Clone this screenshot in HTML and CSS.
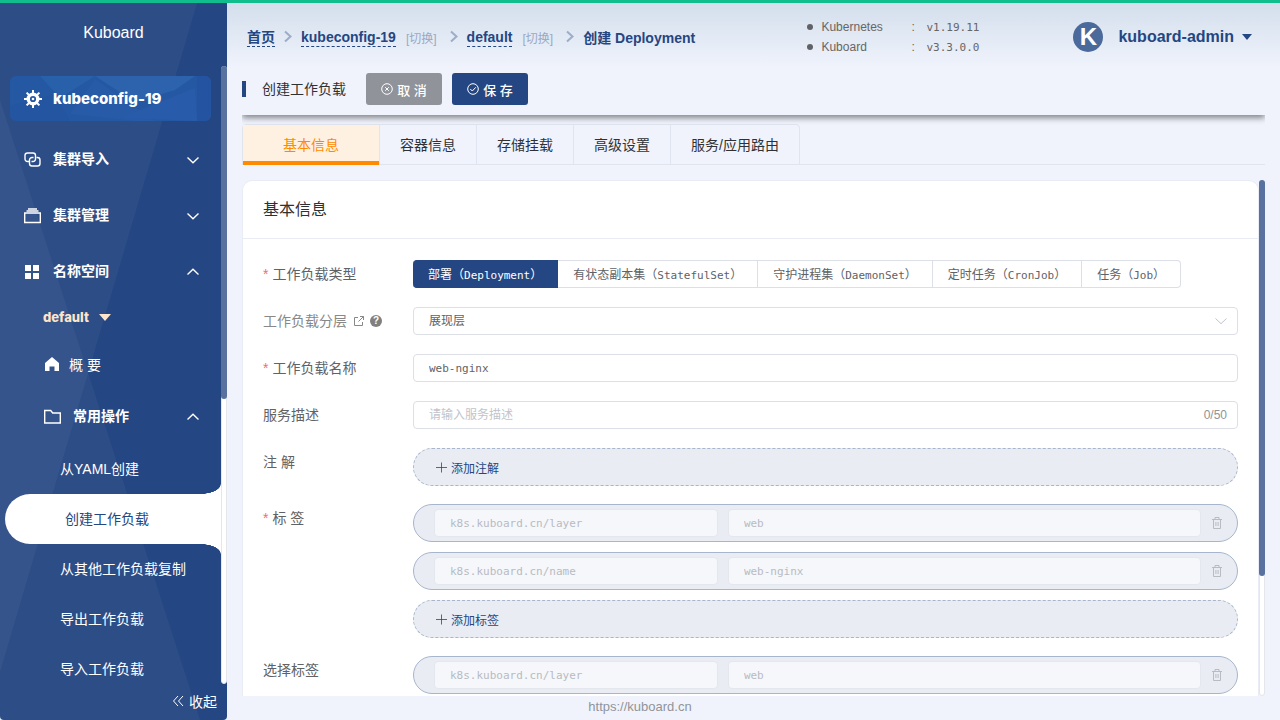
FILE: index.html
```html
<!DOCTYPE html>
<html lang="zh-CN">
<head>
<meta charset="utf-8">
<title>Kuboard</title>
<link rel="stylesheet" href="styles.css">
</head>
<body>
<svg class="sprite" aria-hidden="true">
  <symbol id="down" viewBox="0 0 12 12"><path d="M0.5 3.5 6 8.7l5.500-5.200"/></symbol>
  <symbol id="up" viewBox="0 0 12 12"><path d="M0.500 8.500 6 3.300l5.500 5.200"/></symbol>
  <symbol id="right" viewBox="0 0 12 14"><path d="M3 1.500l5.500 5L3 11.500"/></symbol>
  <symbol id="plus" viewBox="0 0 12 12"><path d="M6.500 1.500v10M1 6.500h11" stroke-width=".8"/></symbol>
  <symbol id="trash" viewBox="0 0 12 12"><path d="M1 2.500h10M4 2.500v-2h4v2M2.500 2.500v9h7v-9M4.900 5v4M7.100 5v4"/></symbol>
</svg>
<div class="app">
  <aside class="sidebar">
    <svg class="sidebar-art" viewBox="0 0 227 717" preserveAspectRatio="none" aria-hidden="true">
      <polygon points="0,0 197,0 0,669"/><polygon points="0,97 200,717 0,717"/>
    </svg>
    <div class="brand">Kuboard</div>
    <div class="sidebar-scroll">
      <nav class="menu">
        <a class="cluster" href="#">
          <svg class="cluster-art" viewBox="0 0 201 45" preserveAspectRatio="none" aria-hidden="true">
            <rect width="201" height="45" fill="#2558a3"/>
            <polygon points="30,0 85,0 50,22" fill="#2960aa"/><polygon points="85,3 145,45 125,45 60,38" fill="#275aa7"/>
            <polygon points="85,0 185,0 165,14 125,26" fill="#2c63ac"/><polygon points="0,30 45,18 60,45 0,45" fill="#2355a1"/>
            <polygon points="110,42 185,12 187,45" fill="#285ba9"/><polygon points="187,0 201,0 201,45 187,45" fill="#2454a1"/>
          </svg>
          <svg class="icon" viewBox="0 0 18 18" aria-hidden="true"><circle cx="9" cy="9" r="4.800" fill="none" stroke="#fff" stroke-width="3.400"/><circle cx="9" cy="9" r="1.300" fill="#fff" stroke="none"/><path d="M9 0v4M9 14v4M0 9h4M14 9h4M2.600 2.600 5 5M13 13l2.400 2.400M15.400 2.600 13 5M5 13l-2.400 2.400" stroke="#fff" stroke-width="2"/></svg>
          <span>kubeconfig-19</span>
        </a>
        <button class="menu-item" type="button">
          <svg class="icon line" viewBox="0 0 18 18"><path d="M5 10.500H3.500A2.500 2.500 0 0 1 1 8V4.500A2.500 2.500 0 0 1 3.500 2H9a2.500 2.500 0 0 1 2.500 2.500V8A2.500 2.500 0 0 1 9 10.500H7.500"/><path d="M12.500 6.500h1A2.500 2.500 0 0 1 16 9v3.500a2.500 2.500 0 0 1-2.500 2.500H8a2.500 2.500 0 0 1-2.500-2.500V9A2.500 2.500 0 0 1 8 6.500h1.500"/></svg>
          <span>集群导入</span><svg class="arrow"><use href="#down"/></svg>
        </button>
        <button class="menu-item" type="button">
          <svg class="icon line" viewBox="0 0 18 18"><path d="M.7 6h15.600v9.500H.7zM2.500 4h12M4 2h9"/></svg>
          <span>集群管理</span><svg class="arrow"><use href="#down"/></svg>
        </button>
        <button class="menu-item" type="button">
          <svg class="icon solid" viewBox="0 0 18 18"><path d="M1 2h6v6H1zM9 2h6v6H9zM1 10h6v6H1zM9 10h6v6H9z"/></svg>
          <span>名称空间</span><svg class="arrow"><use href="#up"/></svg>
        </button>
        <button class="namespace" type="button">default<i class="caret"></i></button>
        <a class="overview" href="#"><svg viewBox="0 0 16 16"><path d="M8 1 15 7v8h-4.500v-4.500h-5V15H1V7z"/></svg>概 要</a>
        <button class="menu-item common" type="button">
          <svg class="icon line" viewBox="0 0 18 18"><path d="M.7 2.500h6l2 2.500h7.600V15H.7z"/></svg>
          <span>常用操作</span><svg class="arrow"><use href="#up"/></svg>
        </button>
        <div class="submenu">
          <a href="#">从YAML创建</a>
          <a class="active" href="#">创建工作负载</a>
          <a href="#">从其他工作负载复制</a>
          <a href="#">导出工作负载</a>
          <a href="#">导入工作负载</a>
        </div>
      </nav>
      <div class="track side-track"><div class="thumb"></div></div>
    </div>
    <button class="collapse" type="button"><svg viewBox="0 0 12 12"><path d="M6 1 1.500 6 6 11M11 1 6.500 6 11 11"/></svg>收起</button>
  </aside>

  <main class="main">
    <header class="header">
      <nav class="crumbs">
        <a href="#">首页</a><svg><use href="#right"/></svg>
        <a href="#">kubeconfig-19</a><button type="button">[切换]</button><svg><use href="#right"/></svg>
        <a href="#">default</a><button type="button">[切换]</button><svg><use href="#right"/></svg>
        <span>创建 Deployment</span>
      </nav>
      <ul class="versions">
        <li><span>Kubernetes</span><span>:</span><code>v1.19.11</code></li>
        <li><span>Kuboard</span><span>:</span><code>v3.3.0.0</code></li>
      </ul>
      <button class="user" type="button"><span class="avatar">K</span>kuboard-admin<i class="caret"></i></button>
    </header>
    <div class="toolbar">
      <h1>创建工作负载</h1>
      <button class="btn cancel" type="button"><svg viewBox="0 0 12 12"><circle cx="6" cy="6" r="5.300"/><path d="M4.200 4.200l3.600 3.600M7.800 4.200 4.200 7.800"/></svg>取 消</button>
      <button class="btn save" type="button"><svg viewBox="0 0 12 12"><circle cx="6" cy="6" r="5.300"/><path d="M3.300 6l2 2 3.500-3.700"/></svg>保 存</button>
    </div>
    <div class="tabs">
      <div class="tab-list" role="tablist">
        <button class="on" role="tab" aria-selected="true" type="button">基本信息</button>
        <button role="tab" type="button">容器信息</button>
        <button role="tab" type="button">存储挂载</button>
        <button role="tab" type="button">高级设置</button>
        <button role="tab" type="button">服务/应用路由</button>
      </div>
    </div>
    <div class="pane">
      <form class="card">
        <h2>基本信息</h2>
        <div class="rows">
          <div class="row">
            <span class="label" id="kind"><b>*</b>工作负载类型</span>
            <div class="kinds" role="radiogroup" aria-labelledby="kind">
              <label><input type="radio" name="kind" checked><span>部署（<code>Deployment</code>）</span></label>
              <label><input type="radio" name="kind"><span>有状态副本集（<code>StatefulSet</code>）</span></label>
              <label><input type="radio" name="kind"><span>守护进程集（<code>DaemonSet</code>）</span></label>
              <label><input type="radio" name="kind"><span>定时任务（<code>CronJob</code>）</span></label>
              <label><input type="radio" name="kind"><span>任务（<code>Job</code>）</span></label>
            </div>
          </div>
          <div class="row">
            <label class="label muted" for="layer">工作负载分层
              <svg viewBox="0 0 12 12"><path d="M5 2.500H1.500v8h8V7M7 1.500h3.500V5M10.500 1.500l-5 5" fill="none" stroke="#888"/></svg>
              <span class="help">?</span></label>
            <div class="field"><select id="layer"><option>展现层</option></select><svg><use href="#down"/></svg></div>
          </div>
          <div class="row">
            <label class="label" for="name"><b>*</b>工作负载名称</label>
            <div class="field"><input id="name" type="text" value="web-nginx"></div>
          </div>
          <div class="row">
            <label class="label" for="desc">服务描述</label>
            <div class="field"><input id="desc" type="text" maxlength="50" placeholder="请输入服务描述"><span class="count">0/50</span></div>
          </div>
          <div class="row">
            <span class="label">注 解</span>
            <div class="stack"><button class="add" type="button"><svg><use href="#plus"/></svg>添加注解</button></div>
          </div>
          <div class="row">
            <span class="label"><b>*</b>标 签</span>
            <div class="stack">
              <div class="pill"><input disabled aria-label="键" value="k8s.kuboard.cn/layer"><input disabled aria-label="值" value="web"><button type="button" disabled aria-label="删除"><svg><use href="#trash"/></svg></button></div>
              <div class="pill"><input disabled aria-label="键" value="k8s.kuboard.cn/name"><input disabled aria-label="值" value="web-nginx"><button type="button" disabled aria-label="删除"><svg><use href="#trash"/></svg></button></div>
              <button class="add" type="button"><svg><use href="#plus"/></svg>添加标签</button>
            </div>
          </div>
          <div class="row">
            <span class="label">选择标签</span>
            <div class="stack">
              <div class="pill"><input disabled aria-label="键" value="k8s.kuboard.cn/layer"><input disabled aria-label="值" value="web"><button type="button" disabled aria-label="删除"><svg><use href="#trash"/></svg></button></div>
            </div>
          </div>
        </div>
      </form>
      <div class="track pane-track"><div class="thumb"></div></div>
    </div>
  </main>
  <footer class="footer"><a href="#">https://kuboard.cn</a></footer>
</div>
</body>
</html>
```
FILE: styles.css
```css
* { box-sizing: border-box; }
body {
  margin: 0;
  background: #f0f3fc;
  color: #606266;
  font: 14px "Liberation Sans", "Noto Sans CJK SC", sans-serif;
}
button, input, select { font: inherit; color: inherit; margin: 0; padding: 0; border: 0; background: none; }
button { cursor: pointer; }
a { color: inherit; text-decoration: none; }
svg { fill: none; stroke: currentColor; flex: none; }
.sprite { position: absolute; width: 0; height: 0; }
.caret { border: 5px solid transparent; border-top: 6px solid currentColor; border-bottom: 0; }

.app {
  display: grid;
  grid-template: minmax(0, 1fr) 24px / 227px minmax(0, 1fr);
  height: 100vh;
  border-top: 3px solid #10bd8c;
}
.footer { grid-area: 2 / 1 / 3 / 3; line-height: 21px; text-align: center; font-size: 13px; color: #909399; }

/* Sidebar */
.sidebar {
  grid-area: 1 / 1 / 3 / 2;
  z-index: 1;
  position: relative;
  display: flex;
  flex-direction: column;
  overflow: hidden;
  border-radius: 0 0 4px 4px;
  background: #244682;
  color: #fff;
}
.sidebar-art { position: absolute; inset: 0; width: 100%; height: 100%; z-index: -1; fill: rgba(255, 255, 255, .045); stroke: none; }
.brand { height: 63px; line-height: 60px; text-align: center; font-size: 16px; }
.sidebar-scroll { flex: 1; min-height: 0; display: grid; grid-template: minmax(0, 1fr) / minmax(0, 1fr) 6px; }
.menu { overflow: hidden; display: flex; flex-direction: column; }
.cluster {
  position: relative;
  isolation: isolate;
  flex: none;
  display: flex;
  align-items: center;
  height: 45px;
  margin: 10px 10px 11px;
  padding-left: 14px;
  border-radius: 6px;
  overflow: hidden;
  font-family: Inter, sans-serif;
  font-size: 15px;
  font-weight: 800;
}
.cluster-art { position: absolute; inset: 0; width: 100%; height: 100%; z-index: -1; stroke: none; }
.icon { width: 18px; height: 18px; margin-right: 11px; }
.solid { fill: #fff; stroke: none; }
.line { stroke-width: 1.4; }
.menu-item { flex: none; display: flex; align-items: center; height: 56px; padding: 0 22px 0 24px; font-weight: 700; line-height: 18px; }
.menu-item span { padding-bottom: 2px; }
.arrow { width: 12px; height: 12px; margin-left: auto; stroke-width: 1.4; }
.namespace { flex: none; display: flex; align-items: center; gap: 10px; height: 34px; padding-left: 43px; color: #ffe4c8; font: 800 13px Inter, sans-serif; }
.namespace .caret { border-width: 7px 6px 0; }
.overview { flex: none; display: flex; align-items: center; gap: 9px; height: 60px; padding-left: 44px; }
.overview svg { width: 16px; height: 16px; fill: #fff; stroke: none; }
.common { height: 46px; padding-left: 44px; }
.submenu { flex: none; padding-top: 4px; }
.submenu a { display: block; line-height: 50px; padding-left: 60px; }
.submenu .active { position: relative; margin-left: 5px; border-radius: 25px 0 0 25px; background: #fff; color: #244682; }
.active::before, .active::after { content: ""; position: absolute; right: 0; width: 20px; height: 10px; }
.active::before { bottom: 100%; background: radial-gradient(20px 10px at 0 0, transparent 97%, #fff 100%); }
.active::after { top: 100%; background: radial-gradient(20px 10px at 0 100%, transparent 97%, #fff 100%); }
.track { width: 6px; border: 1px solid #e4e6eb; border-radius: 3px; background: #fff; }
.thumb { margin: -1px; border-radius: 3px; background: #58719f; }
.side-track .thumb { height: 54%; }
.collapse { display: flex; align-items: center; justify-content: flex-end; gap: 5px; height: 36px; padding: 0 10px 2px 0; }
.collapse svg { width: 12px; height: 12px; }

/* Header */
.main {
  grid-area: 1 / 2;
  display: flex;
  flex-direction: column;
  min-width: 0;
  padding: 0 15px;
  background: linear-gradient(#d3dfec, #f0f3fc 65px);
}
.header { display: grid; grid-template-columns: 1fr 266px auto; align-items: center; height: 68px; padding: 0 13px 0 5px; }
.crumbs { display: flex; align-items: center; color: #244682; font-weight: 700; white-space: nowrap; }
.crumbs a { line-height: 18px; border-bottom: 1px dashed #244682; }
.crumbs svg { width: 12px; height: 14px; margin: 0 7px; color: #9badc8; stroke-width: 2; }
.crumbs button { margin: 0 4px 0 10px; font-size: 12px; font-weight: 400; color: #99a8c5; }
.versions { margin: 0; padding: 0; color: #666; font-size: 12px; list-style: none; }
.versions li { display: grid; grid-template-columns: 14px 90px 15px auto; align-items: center; height: 20px; }
.versions li::before { content: ""; width: 6px; height: 6px; border-radius: 50%; background: #606266; }
code { font: 11px "DejaVu Sans Mono", monospace; }
.user { display: flex; align-items: center; color: #244682; font-size: 16px; font-weight: 700; }
.avatar { width: 30px; margin-right: 15px; border-radius: 50%; background: #4a6a9b; color: #fff; font-size: 24px; line-height: 30px; }
.user .caret { margin-left: 8px; }

.toolbar { display: flex; align-items: center; gap: 10px; height: 44px; padding-bottom: 8px; box-shadow: 0 3px 6px rgba(0, 0, 0, .45); clip-path: inset(0 0 -12px 0); }
h1 { margin: 0 10px 0 0; padding-left: 16px; border-left: 4px solid #244682; color: #303133; font-size: 14px; font-weight: 400; line-height: 16px; }
.btn { display: flex; align-items: center; justify-content: center; gap: 4px; width: 76px; height: 32px; border-radius: 3px; color: #fff; font-size: 13px; font-weight: 500; }
.btn svg { width: 12px; height: 12px; }
.cancel { background: #909399; }
.save { background: #244682; }

.tabs { flex: none; height: 41px; margin-top: 9px; border-bottom: 1px solid #e0e4ee; }
.tab-list { display: inline-flex; height: 41px; border: 1px solid #e0e4ee; border-radius: 4px 4px 0 0; color: #303133; }
.tab-list button { padding: 0 20px 2px; }
.tab-list button + button { border-left: 1px solid #e0e4ee; }
.tab-list .on { padding: 2px 40px 0; margin-bottom: -1px; border-bottom: 4px solid #ff8a00; background: #fff1e2; color: #ff8a00; }

/* Form */
.pane { flex: 1; min-height: 0; display: grid; grid-template: minmax(0, 1fr) / minmax(0, 1fr) 6px; margin-top: 15px; }
.pane-track .thumb { height: 77%; }
.card { overflow: hidden; border: 1px solid #e9ecf5; border-bottom: 0; border-radius: 10px 10px 0 0; background: #fff; }
h2 { margin: 0; padding: 1px 20px 0; border-bottom: 1px solid #e9ecf5; color: #303133; font-size: 16px; font-weight: 400; line-height: 56px; }
.rows { display: flex; flex-direction: column; gap: 18px; padding: 21px 20px; }
.row { display: grid; grid-template-columns: 150px minmax(0, 1fr); align-items: start; min-height: 29px; }
.label { display: flex; align-items: center; line-height: 28px; }
.label b { margin-right: 4px; color: #f56c6c; font-weight: 400; }
.muted { color: #888; }
.muted svg { width: 12px; height: 12px; margin-left: 6px; }
.help { width: 12px; height: 12px; margin-left: 5px; border-radius: 50%; background: #808080; color: #fff; font-size: 10px; font-weight: 700; line-height: 12px; text-align: center; }
.field, .pill { font: 11px "DejaVu Sans Mono", "Noto Sans CJK SC", monospace; }
.kinds { display: flex; font: 12px "Noto Sans CJK SC", sans-serif; white-space: nowrap; }
.kinds input { position: absolute; opacity: 0; }
.kinds span { display: block; height: 28px; padding: 0 15px; border: 1px solid #dcdfe6; border-left: 0; line-height: 26px; }
.kinds label:first-child span { border-radius: 4px 0 0 4px; }
.kinds label:last-child span { border-radius: 0 4px 4px 0; }
.kinds :checked + span { border-color: #244682; background: #244682; color: #fff; }
.field { display: flex; align-items: center; height: 28px; padding-right: 10px; border: 1px solid #dcdfe6; border-radius: 4px; }
.field input, .field select { flex: 1; min-width: 0; height: 26px; padding: 0 15px; outline: 0; appearance: none; }
.field select, #desc { font-size: 12px; }
.field svg { width: 12px; height: 12px; color: #c0c4cc; }
::placeholder { color: #c0c4cc; opacity: 1; }
.count { color: #909399; font: 12px "Liberation Sans", sans-serif; }
.stack { display: grid; gap: 10px; }
.add, .pill { height: 38px; border: 1px solid #a7b5cd; border-radius: 19px; background: #e9ecf3; }
.add { display: flex; align-items: center; gap: 4px; padding-left: 21px; border-style: dashed; color: #244682; font-size: 12px; }
.add svg { width: 12px; height: 12px; }
.pill { display: grid; grid-template-columns: minmax(0, 3fr) minmax(0, 5fr) 26px; align-items: center; gap: 10px; padding-left: 20px; color: #b8bbc2; }
.pill input { height: 28px; padding: 0 15px; border: 1px solid #e4e7ed; border-radius: 4px; background: #f5f7fa; }
.pill svg { display: block; width: 12px; height: 12px; }
```
